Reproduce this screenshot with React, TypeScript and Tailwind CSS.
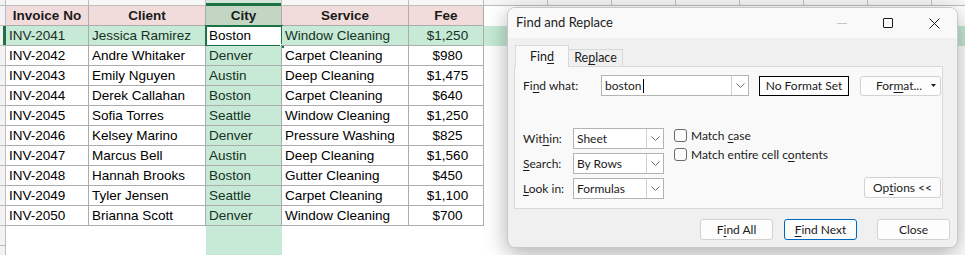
import React from "react";

const rows = [
  ["INV-2041", "Jessica Ramirez", "Boston", "Window Cleaning", "$1,250"],
  ["INV-2042", "Andre Whitaker", "Denver", "Carpet Cleaning", "$980"],
  ["INV-2043", "Emily Nguyen", "Austin", "Deep Cleaning", "$1,475"],
  ["INV-2044", "Derek Callahan", "Boston", "Carpet Cleaning", "$640"],
  ["INV-2045", "Sofia Torres", "Seattle", "Window Cleaning", "$1,250"],
  ["INV-2046", "Kelsey Marino", "Denver", "Pressure Washing", "$825"],
  ["INV-2047", "Marcus Bell", "Austin", "Deep Cleaning", "$1,560"],
  ["INV-2048", "Hannah Brooks", "Boston", "Gutter Cleaning", "$450"],
  ["INV-2049", "Tyler Jensen", "Seattle", "Carpet Cleaning", "$1,100"],
  ["INV-2050", "Brianna Scott", "Denver", "Window Cleaning", "$700"],
];

const W = ["w-[83px]", "w-[117px]", "w-[76px]", "w-[127px]", "w-[75px]"];
const extra = [0, 1, 2, 3, 4, 5, 6, 7];

function Chevron() {
  return (
    <svg width="9" height="5" viewBox="0 0 9 5" className="block">
      <polyline points="0.5,0.5 4.5,4.5 8.5,0.5" fill="none" stroke="#6b6b6b" strokeWidth="1" />
    </svg>
  );
}

function Select({ value }: { value: string }) {
  return (
    <div className="flex h-[21px] w-[91px] items-center border border-[#b4b4b4] bg-white">
      <span className="flex-1 pl-[3px]">{value}</span>
      <div className="flex h-full w-[17px] items-center justify-center border-l border-[#d0d0d0]">
        <Chevron />
      </div>
    </div>
  );
}

function Checkbox({ children }: { children: React.ReactNode }) {
  return (
    <div className="flex h-[13px] items-center gap-[4px]">
      <div className="h-[13px] w-[13px] shrink-0 rounded-[3px] border border-[#6a6a6a] bg-[#fbfbfb]" />
      <span>{children}</span>
    </div>
  );
}

function Btn({ children, extraCls }: { children: React.ReactNode; extraCls?: string }) {
  return (
    <div
      className={
        "flex h-[21px] w-[73px] items-center justify-center rounded-[3px] border bg-[#fdfdfd] " +
        (extraCls ?? "border-[#d2d2d2]")
      }
    >
      {children}
    </div>
  );
}

export default function App() {
  return (
    <div className="relative h-[255px] w-[965px] overflow-hidden bg-white text-[13.5px] text-black [font-family:'Liberation_Sans',Arial,sans-serif]">
      {/* Sheet */}
      <div className="flex flex-col">
        {/* column header strip */}
        <div className="flex h-[6px]">
          <div className="w-[6px] shrink-0 border-b border-r border-[#bdbdbd] bg-[#f3f3f3]" />
          {W.map((w, i) => (
            <div
              key={i}
              className={
                w +
                " relative shrink-0 border-b border-r border-[#bdbdbd] " +
                (i === 2 ? "bg-[#d3e6d8]" : "bg-[#f7f7f7]")
              }
            >
              {i === 2 && <div className="absolute bottom-[-1px] left-0 right-0 h-[3px] bg-[#1e7145]" />}
            </div>
          ))}
          {extra.map((i) => (
            <div key={i} className="w-[64px] shrink-0 border-b border-r border-[#bdbdbd] bg-[#f7f7f7]" />
          ))}
        </div>
        {/* header row */}
        <div className="flex h-[20px]">
          <div className="w-[6px] shrink-0 border-b border-r border-[#bdbdbd] bg-[#f3f3f3]" />
          {["Invoice No", "Client", "City", "Service", "Fee"].map((t, i) => (
            <div
              key={i}
              className={
                W[i] +
                " flex shrink-0 items-center justify-center border-b border-r border-[#acacac] pt-[1px] font-bold text-[#1a1a1a] " +
                (i === 2 ? "bg-[#c3d6c4]" : "bg-[#f2dcdb]")
              }
            >
              {t}
            </div>
          ))}
          {extra.map((i) => (
            <div key={i} className="w-[64px] shrink-0" />
          ))}
        </div>
        {/* data rows */}
        {rows.map((r, ri) => {
          const sel = ri === 0;
          return (
            <div key={ri} className={"flex h-[20px] " + (sel ? "bg-[#c6ead5]" : "")}>
              <div className="relative w-[6px] shrink-0 border-b border-r border-[#bdbdbd] bg-[#f3f3f3]">
                {sel && <div className="absolute right-[-1px] top-0 h-full w-[3px] bg-[#1e7145]" />}
              </div>
              {r.map((t, i) => {
                const active = sel && i === 2;
                return (
                  <div
                    key={i}
                    className={
                      W[i] +
                      " relative flex shrink-0 items-center border-b border-r border-[#acacac] pl-[3px] pt-[2px] " +
                      (i === 4 ? "justify-center pl-0 " : "") +
                      (active ? "bg-white text-black " : i === 2 || sel ? "bg-[#c6ead5] text-[#17301f] " : "text-black ")
                    }
                  >
                    {t}
                    {active && (
                      <>
                        <div className="absolute bottom-[-2px] left-[-1px] right-[-2px] top-[-1px] border-2 border-[#1e7145]" />
                        <div className="absolute bottom-[-4px] right-[-4px] h-[5px] w-[5px] border border-white bg-[#1e7145]" />
                      </>
                    )}
                  </div>
                );
              })}
              {extra.map((i) => (
                <div key={i} className="w-[64px] shrink-0" />
              ))}
            </div>
          );
        })}
        {/* empty rows */}
        {[0, 1].map((k) => (
          <div key={k} className="flex h-[20px]">
            <div className="w-[6px] shrink-0 border-b border-r border-[#bdbdbd] bg-[#f3f3f3]" />
            <div className="w-[83px] shrink-0" />
            <div className="w-[117px] shrink-0" />
            <div className="w-[76px] shrink-0 bg-[#c6ead5]" />
          </div>
        ))}
      </div>

      {/* Find and Replace dialog */}
      <div className="absolute left-[507px] top-[7px] flex h-[241px] w-[451px] flex-col overflow-hidden rounded-[8px] border border-[#c8c8c8] bg-[#f0f0f0] text-[12px] text-[#1b1b1b] shadow-[0_6px_22px_rgba(0,0,0,0.32)] [font-family:Lato,'Noto_Sans',sans-serif]">
        {/* title bar */}
        <div className="flex h-[30px] shrink-0 items-center bg-[#f9f9f9]">
          <span className="pl-[8px] text-[13px]">Find and Replace</span>
          <div className="ml-auto flex h-full">
            <div className="flex w-[46px] items-center justify-center">
              <div className="h-px w-[10px] bg-[#c4c4c4]" />
            </div>
            <div className="flex w-[46px] items-center justify-center">
              <div className="h-[10px] w-[10px] rounded-[1px] border border-[#1b1b1b]" />
            </div>
            <div className="flex w-[46px] items-center justify-center">
              <svg width="11" height="11" viewBox="0 0 11 11">
                <path d="M0.5 0.5 L10.5 10.5 M10.5 0.5 L0.5 10.5" stroke="#1b1b1b" strokeWidth="1" />
              </svg>
            </div>
          </div>
        </div>

        <div className="flex flex-col px-[6px] pt-[8px]">
          {/* tabs */}
          <div className="flex h-[21px] items-end pl-[1px]">
            <div className="relative z-10 flex h-[22px] w-[54px] items-center justify-center border border-b-0 border-[#d9d9d9] bg-[#f9f9f9] pt-[1px] text-[12.5px]">
              Fin<u className="underline-offset-2">d</u>
            </div>
            <div className="flex h-[18px] w-[54px] items-center justify-center border border-b-0 border-l-0 border-[#d9d9d9] bg-[#f0f0f0] text-[12.5px]">
              Re<u className="underline-offset-2">p</u>lace
            </div>
          </div>
          {/* panel */}
          <div className="-mt-px flex h-[143px] w-[429px] flex-col border border-[#d9d9d9] bg-[#f9f9f9] pb-[9px] pl-[8px] pr-[1px] pt-[8px]">
            <div className="flex h-[21px] items-center">
              <span className="w-[78px]">
                Fi<u className="underline-offset-2">n</u>d what:
              </span>
              <div className="flex h-[21px] w-[148px] items-center border border-[#b4b4b4] bg-white">
                <span className="flex flex-1 items-center pl-[3px]">
                  boston<span className="ml-px inline-block h-[14px] w-px bg-black" />
                </span>
                <div className="flex h-full w-[17px] items-center justify-center border-l border-[#d0d0d0]">
                  <Chevron />
                </div>
              </div>
              <div className="ml-[10px] flex h-[20px] w-[90px] items-center justify-center border border-black bg-white">
                No Format Set
              </div>
              <div className="ml-[11px] flex h-[20px] w-[81px] items-center rounded-[3px] border border-[#d2d2d2] bg-[#fdfdfd]">
                <span className="flex-1 pl-[6px] text-center">
                  For<u className="underline-offset-2">m</u>at...
                </span>
                <svg width="5" height="3" viewBox="0 0 5 3" className="mr-[4px]">
                  <polygon points="0,0 5,0 2.5,3" fill="#1b1b1b" />
                </svg>
              </div>
            </div>

            <div className="mt-auto flex items-start">
              <div className="flex flex-col gap-[4px]">
                <div className="flex items-center">
                  <span className="w-[50px]">
                    Wit<u className="underline-offset-2">h</u>in:
                  </span>
                  <Select value="Sheet" />
                </div>
                <div className="flex items-center">
                  <span className="w-[50px]">
                    <u className="underline-offset-2">S</u>earch:
                  </span>
                  <Select value="By Rows" />
                </div>
                <div className="flex items-center">
                  <span className="w-[50px]">
                    <u className="underline-offset-2">L</u>ook in:
                  </span>
                  <Select value="Formulas" />
                </div>
              </div>
              <div className="ml-[10px] flex flex-col gap-[6px] pt-[1px]">
                <Checkbox>
                  Match <u className="underline-offset-2">c</u>ase
                </Checkbox>
                <Checkbox>
                  Match entire cell c<u className="underline-offset-2">o</u>ntents
                </Checkbox>
              </div>
              <div className="mb-px ml-auto flex h-[21px] w-[77px] items-center justify-center self-end rounded-[3px] border border-[#d2d2d2] bg-[#fdfdfd]">
                Op<u className="underline-offset-2">t</u>ions &lt;&lt;
              </div>
            </div>
          </div>
        </div>

        {/* bottom buttons */}
        <div className="mt-[10px] flex justify-end pr-[7px]">
          <Btn>
            F<u className="underline-offset-2">i</u>nd All
          </Btn>
          <div className="ml-[11px]">
            <Btn extraCls="border-[#0067c0]">
              <u className="underline-offset-2">F</u>ind Next
            </Btn>
          </div>
          <div className="ml-[20px]">
            <Btn>Close</Btn>
          </div>
        </div>
      </div>
    </div>
  );
}
